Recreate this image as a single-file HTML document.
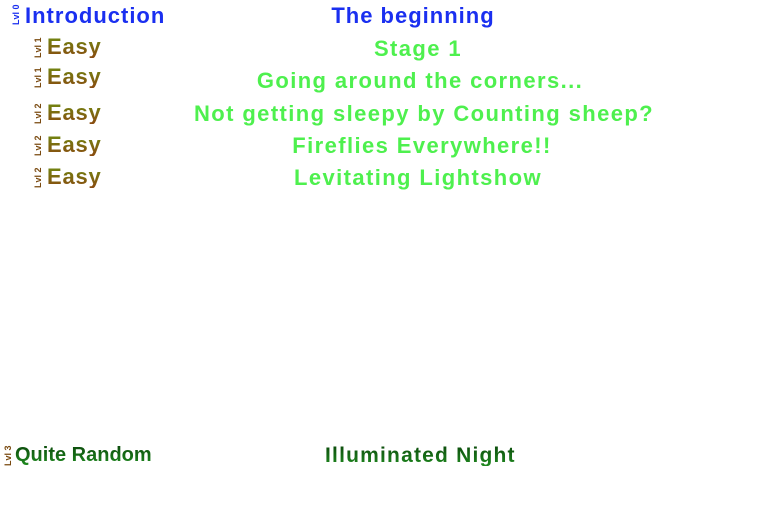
<html><head><style>
body{margin:0;width:768px;height:512px;background:#fff;position:relative;overflow:hidden;font-family:"Liberation Sans",sans-serif;font-weight:bold}
.t{position:absolute;white-space:nowrap;line-height:1}
.blue{color:#1a2ff0;font-size:22px;letter-spacing:1px}
.easy{font-size:22px;letter-spacing:0.8px;background:linear-gradient(#6f8a10,#8a4a10);-webkit-background-clip:text;color:transparent}
.g{color:#4ef04e;font-size:22px;letter-spacing:1.4px;transform:translateX(-50%)}
.dg{font-size:21px;background:linear-gradient(#0c4a0c,#1f8a1f);-webkit-background-clip:text;color:transparent}
.lv{position:absolute;font-size:9px;transform:rotate(-90deg);transform-origin:left top;white-space:nowrap;line-height:1}
</style></head><body>
<div class="lv" style="left:12px;top:25px;color:#1a2ff0">Lvl 0</div>
<div class="t blue" style="left:25px;top:5px">Introduction</div>
<div class="t blue" style="left:413px;top:5px;transform:translateX(-50%)">The beginning</div>

<div class="lv" style="left:34px;top:58px;color:#7a4a10">Lvl 1</div>
<div class="t easy" style="left:47px;top:36px">Easy</div>
<div class="t g" style="left:418px;top:38px">Stage 1</div>

<div class="lv" style="left:34px;top:88px;color:#7a4a10">Lvl 1</div>
<div class="t easy" style="left:47px;top:66px">Easy</div>
<div class="t g" style="left:420px;top:70px">Going around the corners...</div>

<div class="lv" style="left:34px;top:124px;color:#7a4a10">Lvl 2</div>
<div class="t easy" style="left:47px;top:102px">Easy</div>
<div class="t g" style="left:424px;top:103px">Not getting sleepy by Counting sheep?</div>

<div class="lv" style="left:34px;top:156px;color:#7a4a10">Lvl 2</div>
<div class="t easy" style="left:47px;top:134px">Easy</div>
<div class="t g" style="left:422px;top:135px">Fireflies Everywhere!!</div>

<div class="lv" style="left:34px;top:188px;color:#7a4a10">Lvl 2</div>
<div class="t easy" style="left:47px;top:166px">Easy</div>
<div class="t g" style="left:418px;top:167px">Levitating Lightshow</div>

<div class="lv" style="left:4px;top:466px;color:#7a4a10">Lvl 3</div>
<div class="t dg" style="left:15px;top:445px;font-size:20px">Quite Random</div>
<div class="t dg" style="left:325px;top:445px;letter-spacing:1.2px">Illuminated Night</div>
</body></html>
